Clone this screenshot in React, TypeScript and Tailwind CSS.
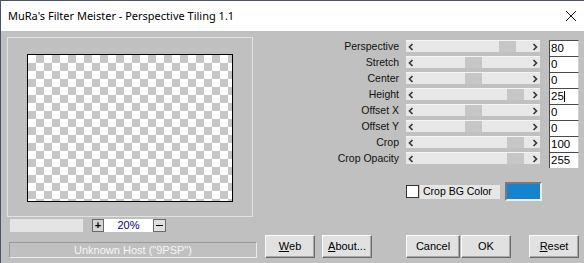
import { ReactNode } from "react";

type Slider = {
  label: string;
  value: string;
  pos: number;
  cursor?: boolean;
};

const sliders: Slider[] = [
  { label: "Perspective", value: "80", pos: 93 },
  { label: "Stretch", value: "0", pos: 59 },
  { label: "Center", value: "0", pos: 59 },
  { label: "Height", value: "25", pos: 101, cursor: true },
  { label: "Offset X", value: "0", pos: 59 },
  { label: "Offset Y", value: "0", pos: 59 },
  { label: "Crop", value: "100", pos: 101 },
  { label: "Crop Opacity", value: "255", pos: 101 },
];

const Chevron = ({ dir }: { dir: "left" | "right" }) => (
  <svg width="8" height="8" viewBox="0 0 8 8" className="shrink-0">
    <path
      d={dir === "left" ? "M5.5 1 L2.5 4 L5.5 7" : "M2.5 1 L5.5 4 L2.5 7"}
      fill="none"
      stroke="#3a3a3a"
      strokeWidth="1.7"
    />
  </svg>
);

const Button = ({ w, children }: { w: string; children: ReactNode }) => (
  <button
    className={`${w} h-[23px] flex items-center justify-center bg-[#e1e1e1] border border-t-[#fbfbfb] border-l-[#fbfbfb] border-b-[#6b6b6b] border-r-[#6b6b6b] shadow-[inset_-1px_-1px_0_#a8a8a8] text-[11px] text-black`}
  >
    {children}
  </button>
);

export default function App() {
  return (
    <div className="w-[584px] h-[263px] overflow-hidden bg-[#c0c0c0] border-l border-t border-[#4a5468] flex flex-col font-['Liberation_Sans',Arial,sans-serif]">
      {/* title bar */}
      <div className="h-[30px] shrink-0 bg-white flex items-center justify-between pl-[7px] pr-[6px]">
        <span className="text-[11px] text-black font-['Noto_Sans',sans-serif]">
          MuRa's Filter Meister - Perspective Tiling 1.1
        </span>
        <svg width="12" height="12" viewBox="0 0 12 12" className="mr-[1px]">
          <path d="M1 1 L11 11 M11 1 L1 11" stroke="#111" strokeWidth="1" />
        </svg>
      </div>

      {/* body */}
      <div className="flex flex-1 pl-[6px]">
        {/* left column */}
        <div className="w-[250px] flex flex-col pt-[6px]">
          <div className="w-[246px] h-[180px] border border-[#e2e2e2] pt-[16px] pl-[19px]">
            <div className="w-[206px] h-[148px] border-[1.5px] border-black bg-[repeating-conic-gradient(#c6c6c6_0_25%,#ffffff_0_50%)] bg-[length:16px_16px]" />
          </div>

          <div className="flex items-center mt-[2px] ml-[3px]">
            <div className="w-[73px] h-[13px] bg-[#e4e4e4]" />
            <div className="ml-[9px] w-[74px] h-[13px] bg-white flex items-center justify-between">
              <div className="w-[12px] h-[13px] bg-[#d4d4d4] border border-[#6a6a6a] flex items-center justify-center text-[11px] font-bold leading-none">
                +
              </div>
              <span className="text-[11px] text-[#000080] leading-none">20%</span>
              <div className="w-[13px] h-[13px] bg-[#e0e0e0] border border-[#6a6a6a] flex items-center justify-center">
                <div className="w-[7px] h-[1px] bg-black" />
              </div>
            </div>
          </div>

          <div className="mt-[10px] ml-[2px] w-[248px] h-[16px] border border-t-[#9a9a9a] border-l-[#9a9a9a] border-b-[#ececec] border-r-[#ececec] flex items-center justify-center text-[11px] text-[#f6f6f6]">
            Unknown Host ("9PSP")
          </div>
        </div>

        {/* right column */}
        <div className="flex flex-col pt-[9px]">
          <div className="flex flex-col">
            {sliders.map((s) => (
              <div key={s.label} className="flex h-[16px]">
                <div className="w-[142px] h-[12px] text-right text-[10.5px] leading-[12px] text-[#111]">
                  {s.label}
                </div>
                <div className="relative ml-[7px] w-[134px] h-[12px] bg-[#e8e8e8] border-t border-[#f4f4f4] flex items-center justify-between px-[1px]">
                  <Chevron dir="left" />
                  <div
                    className="absolute top-0 bottom-0 w-[17px] bg-[#c6c6c6]"
                    style={{ left: s.pos }}
                  />
                  <Chevron dir="right" />
                </div>
                <div className="ml-[9px] w-[30px] h-[16px] bg-white border-l border-t border-[#4a4a4a] border-r border-r-[#d0d0d0] flex items-center pl-[1px] text-[11.5px] leading-none text-black">
                  {s.value}
                  {s.cursor && <span className="w-[1px] h-[11px] bg-black" />}
                </div>
              </div>
            ))}
          </div>

          <div className="flex items-center mt-[14px] ml-[149px] h-[19px]">
            <div className="w-[13px] h-[13px] bg-white border border-[#333]" />
            <div className="ml-[1px] w-[80px] h-[14px] bg-[#e6e6e6] flex items-center pl-[3px] text-[10.5px] text-black">
              Crop BG Color
            </div>
            <div className="ml-[5px] w-[37px] h-[19px] bg-[#1584d0] border-[2px] border-t-[#7a7a7a] border-l-[#7a7a7a] border-b-[#f0f0f0] border-r-[#f0f0f0]" />
          </div>

          <div className="flex mt-[34px] ml-[8px]">
            <Button w="w-[50px]">
              <span className="underline underline-offset-1">W</span>eb
            </Button>
            <div className="ml-[7px]">
              <Button w="w-[50px]">
                <span className="underline underline-offset-1">A</span>bout...
              </Button>
            </div>
            <div className="ml-[34px]">
              <Button w="w-[54px]">Cancel</Button>
            </div>
            <div className="ml-[1px]">
              <Button w="w-[50px]">OK</Button>
            </div>
            <div className="ml-[18px]">
              <Button w="w-[50px]">
                <span className="underline underline-offset-1">R</span>eset
              </Button>
            </div>
          </div>
        </div>
      </div>
    </div>
  );
}
